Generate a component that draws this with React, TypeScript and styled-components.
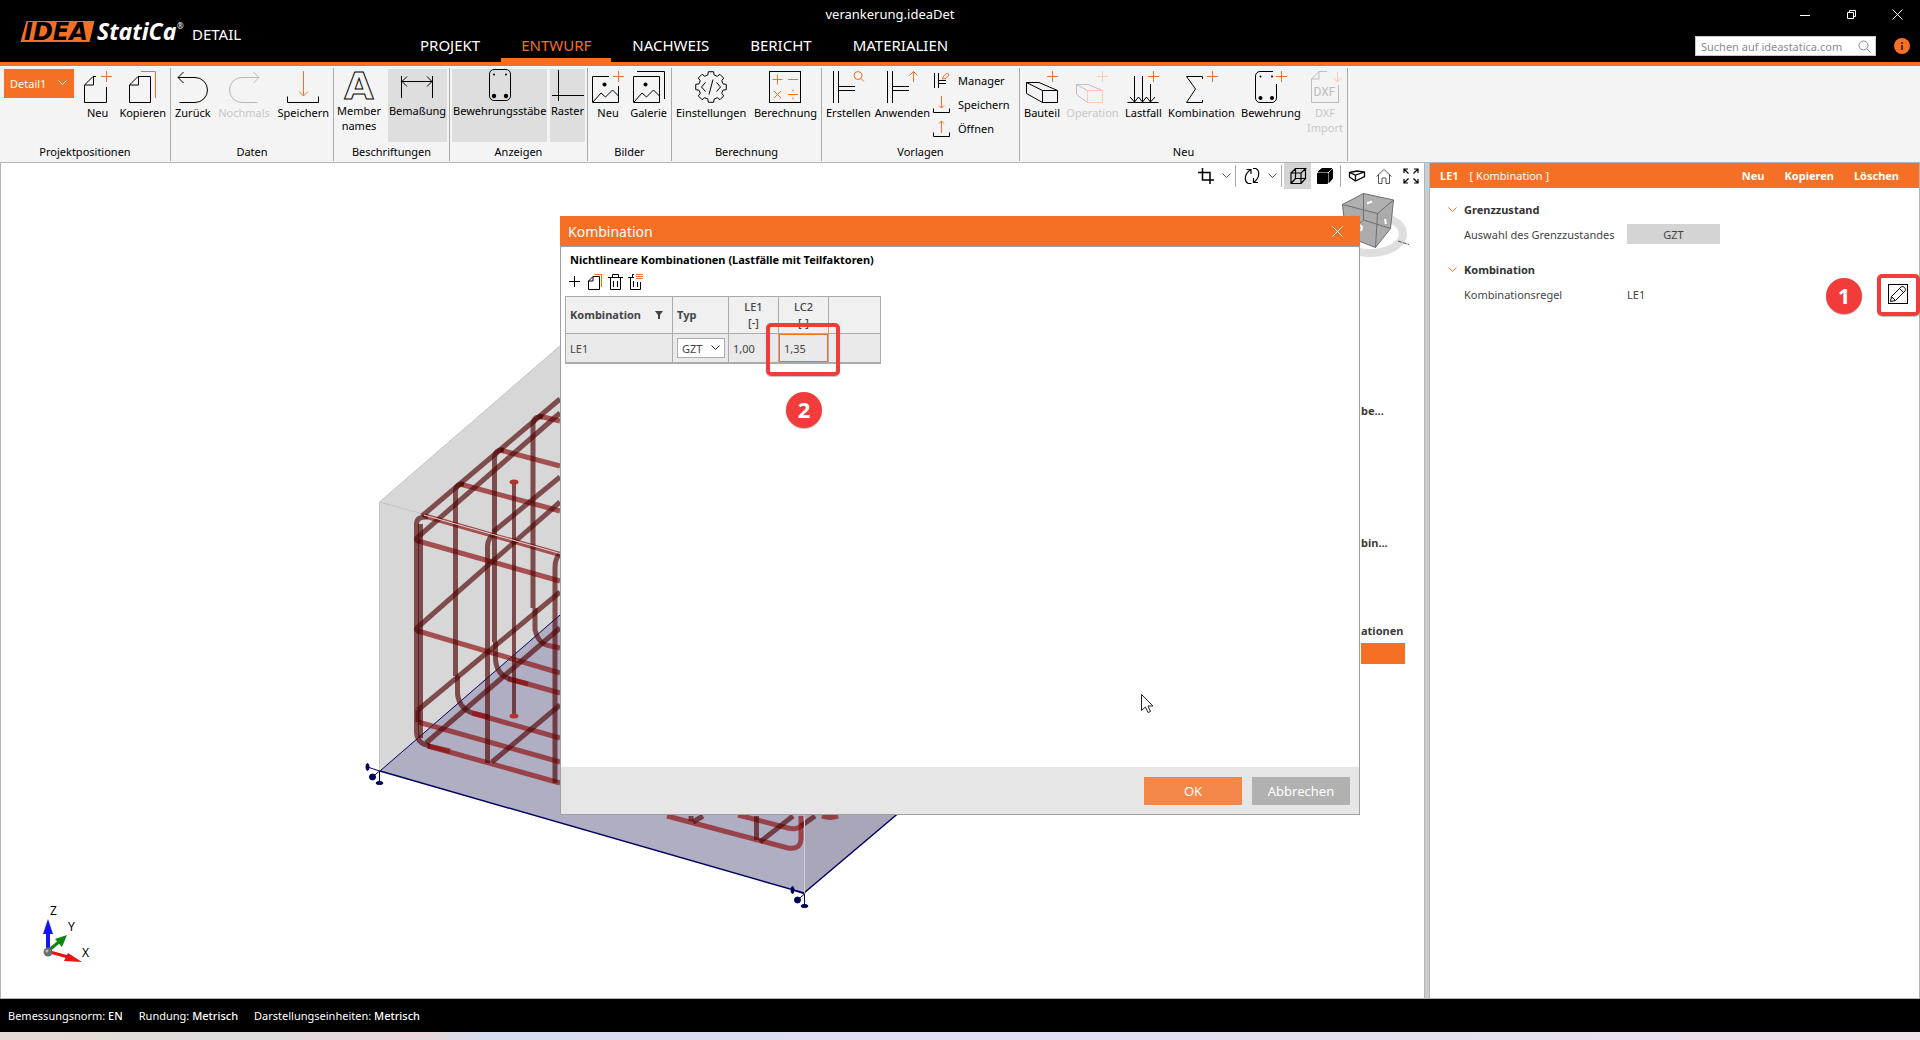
import React from "react";
import styled, { createGlobalStyle, css } from "styled-components";

const orange = "#f56f24";
const alarm = "#f23c3c";
const rule = "#b4b4b4";

const GlobalStyle = createGlobalStyle`
  *, *::before, *::after { box-sizing: border-box; }
  body { margin: 0; background: #fff; font-family: "Noto Sans", "Open Sans", sans-serif; font-size: 11px; color: #000; }
  button, input, select { font: inherit; color: inherit; border-radius: 0; }
  button { border: 0; padding: 0; background: none; }
  svg { display: block; flex: none; }
`;

const Shell = styled.div`
  position: relative;
  display: flex;
  flex-direction: column;
  min-height: 100vh;
`;

/* ---------- header ---------- */

const Header = styled.header`
  display: grid;
  grid-template-columns: 400px minmax(580px, 1fr) 540px;
  height: 66px;
  background: #000;
  color: #fff;
  border-bottom: 4px solid ${orange};
`;

const Brand = styled.div`
  display: flex;
  align-items: flex-start;
  gap: 4px;
  padding: 18px 0 0 20px;
`;

const Product = styled.span`
  font-size: 15px;
  line-height: 32px;
`;

const HeaderMiddle = styled.div`
  display: flex;
  flex-direction: column;
  justify-content: space-between;
`;

const DocTitle = styled.div`
  font-size: 13px;
  line-height: 28px;
  text-align: center;
`;

const Tabs = styled.nav`
  display: flex;
  gap: 1px;
`;

const Tab = styled.a<{ $active?: boolean }>`
  padding: 0 20px;
  height: 33px;
  font-size: 15px;
  line-height: 32px;
  text-decoration: none;
  color: ${(p) => (p.$active ? orange : "#fff")};
  border-bottom: 4px solid ${(p) => (p.$active ? orange : "#000")};
`;

const HeaderRight = styled.div`
  display: flex;
  flex-direction: column;
  align-items: flex-end;
`;

const WindowButtons = styled.div`
  display: flex;
  height: 36px;
`;

const WindowButton = styled.button`
  display: flex;
  justify-content: center;
  width: 46px;
  padding-top: 9px;
`;

const SearchLine = styled.div`
  display: flex;
  align-items: center;
  gap: 18px;
  padding-right: 10px;
`;

const SearchBox = styled.label`
  display: flex;
  align-items: center;
  width: 181px;
  height: 20px;
  padding: 0 4px 0 5px;
  background: #fff;
  border: 1px solid #c8c8c8;
`;

const SearchInput = styled.input`
  flex: 1;
  min-width: 0;
  padding: 0;
  border: 0;
  outline: 0;
  background: none;
  color: #444;
  &::placeholder { color: #8c8c8c; opacity: 1; }
`;

/* ---------- ribbon ---------- */

const Ribbon = styled.div`
  display: flex;
  height: 97px;
  padding: 2px 0 1px;
  background: #f4f4f4;
  border-bottom: 1px solid ${rule};
`;

const Group = styled.section<{ $width: number }>`
  flex: 0 0 ${(p) => p.$width}px;
  display: flex;
  flex-direction: column;
  border-right: 1px solid #aaa;
`;

const GroupBody = styled.div`
  display: flex;
  justify-content: space-between;
  height: 76px;
  padding: 1px 2px;
`;

const GroupName = styled.div`
  line-height: 18px;
  text-align: center;
`;

const Tool = styled.button<{ $on?: boolean; $high?: boolean; $faded?: boolean }>`
  display: flex;
  flex-direction: column;
  align-items: center;
  gap: 2px;
  padding: ${(p) => (p.$high ? "0 1px" : "2px 2px 0")};
  line-height: 15px;
  background: ${(p) => (p.$on ? "#dedede" : "none")};
  color: ${(p) => (p.$faded ? "#c8c8c8" : "#000")};
`;

const ToolLabel = styled.span`
  white-space: pre-line;
`;

const ToolStack = styled.div`
  flex: 1;
  display: flex;
  flex-direction: column;
`;

const SmallTool = styled.button`
  display: flex;
  align-items: center;
  gap: 8px;
  height: 24px;
  padding: 0 0 2px 1px;
`;

const PositionPicker = styled.div`
  position: relative;
  width: 70px;
  height: 29px;
  margin: 0 4px 0 2px;
  background: ${orange};
  color: #fff;
`;

const PositionSelect = styled.select`
  appearance: none;
  width: 100%;
  height: 100%;
  padding: 0 0 0 6px;
  border: 0;
  background: transparent;
`;

const PickerArrow = styled.span`
  position: absolute;
  right: 7px;
  top: 11px;
  pointer-events: none;
`;

/* ---------- workspace ---------- */

const Workspace = styled.main`
  flex: 1;
  display: grid;
  grid-template-columns: minmax(0, 1fr) 6px 490px;
  border-left: 1px solid ${rule};
  border-bottom: 1px solid ${rule};
`;

const Viewport = styled.section`
  position: relative;
  display: flex;
  flex-direction: column;
  align-items: flex-end;
`;

const ModelDrawing = styled.svg`
  position: absolute;
  inset: 0;
  width: 100%;
  height: 100%;
`;

const ViewBar = styled.div`
  position: relative;
  display: flex;
  align-items: center;
  height: 26px;
`;

const ViewButton = styled.button<{ $on?: boolean; $narrow?: boolean }>`
  display: flex;
  align-items: center;
  justify-content: center;
  width: ${(p) => (p.$narrow ? 14 : 27)}px;
  height: 26px;
  background: ${(p) => (p.$on ? "#d4d4d4" : "none")};
`;

const ViewRule = styled.span`
  width: 1px;
  height: 22px;
  margin: 0 2px;
  background: #aaa;
`;

const Tree = styled.div`
  position: absolute;
  right: 19px;
  top: 240px;
  width: 44px;
  display: flex;
  flex-direction: column;
  color: #3c3c3c;
  font-weight: 700;
  line-height: 16px;
`;

const TreeNode = styled.div<{ $gap: number }>`
  margin-bottom: ${(p) => p.$gap}px;
`;

const TreeSelection = styled.div`
  height: 21px;
  background: ${orange};
`;

const Splitter = styled.div`
  background: #cdcdcd;
  border-left: 1px solid ${rule};
  border-right: 1px solid ${rule};
`;

const Panel = styled.aside`
  border-right: 1px solid ${rule};
  color: #444;
`;

const PanelHead = styled.div`
  display: flex;
  align-items: center;
  gap: 11px;
  height: 25px;
  padding: 0 20px 1px 10px;
  background: ${orange};
  color: #fff;
`;

const PanelActions = styled.div`
  display: flex;
  gap: 20px;
  margin-left: auto;
  font-weight: 700;
`;

const Property = styled.div`
  position: relative;
  display: flex;
  align-items: center;
  height: 24px;
  padding: 0 11px 0 34px;
`;

const PropertyName = styled.label`
  width: 163px;
`;

const Section = styled.section`
  padding: 9px 0 2px;
`;

const SectionTitle = styled.button`
  display: flex;
  align-items: center;
  gap: 7px;
  height: 25px;
  padding-left: 18px;
  font-weight: 700;
  color: #333;
`;

const StateButton = styled.button`
  width: 93px;
  height: 20px;
  background: #d4d4d4;
`;

const EditButton = styled.button`
  margin-left: auto;
`;

/* ---------- callouts ---------- */

const Frame = styled.div<{ $x: number; $y: number; $w: number; $h: number; $fromRight?: boolean }>`
  position: absolute;
  ${(p) => (p.$fromRight ? css`right: ${p.$x}px;` : css`left: ${p.$x}px;`)}
  top: ${(p) => p.$y}px;
  width: ${(p) => p.$w}px;
  height: ${(p) => p.$h}px;
  border: 4px solid ${alarm};
  border-radius: 5px;
  box-shadow: 0 1px 1px #8888;
  pointer-events: none;
`;

const Step = styled.div<{ $x: number; $y: number; $fromRight?: boolean }>`
  position: absolute;
  ${(p) => (p.$fromRight ? css`right: ${p.$x}px;` : css`left: ${p.$x}px;`)}
  top: ${(p) => p.$y}px;
  width: 36px;
  height: 36px;
  border-radius: 50%;
  background: ${alarm};
  box-shadow: 0 1px 1px #8888;
  color: #fff;
  font: 700 22px/35px "Noto Sans", sans-serif;
  text-align: center;
`;

/* ---------- dialog ---------- */

const Overlay = styled.div`
  position: absolute;
  inset: 0;
  display: flex;
  justify-content: center;
  align-items: flex-start;
  padding-top: 216px;
`;

const Dialog = styled.div`
  position: relative;
  display: flex;
  flex-direction: column;
  width: 800px;
  height: 599px;
  background: #fff;
  border: 1px solid #a0a0a0;
  border-top: 0;
`;

const DialogHead = styled.div`
  display: flex;
  align-items: center;
  justify-content: space-between;
  height: 31px;
  margin: 0 -1px;
  padding: 0 17px 0 8px;
  background: ${orange};
  border-bottom: 1px solid #a0a0a0;
  color: #fff;
  font-size: 14px;
`;

const DialogBody = styled.div`
  flex: 1;
  padding: 4px;
`;

const DialogTitle = styled.h2`
  margin: 0 0 0 5px;
  font-size: 11px;
  line-height: 18px;
`;

const IconRow = styled.div`
  display: flex;
  gap: 4px;
  margin: 5px 0 6px 3px;
`;

const Grid = styled.table`
  width: 315px;
  table-layout: fixed;
  border-collapse: collapse;
  border: 1px solid #ababab;
  border-bottom-width: 2px;
  color: #444;
  tbody tr { height: 29px; background: #eaeaea; }
`;

const Head = styled.th<{ $w: number; $center?: boolean }>`
  width: ${(p) => p.$w}px;
  height: 37px;
  padding: 0 4px;
  border: 1px solid #ababab;
  background: #f0f0f0;
  line-height: 16px;
  text-align: ${(p) => (p.$center ? "center" : "left")};
  font-weight: ${(p) => (p.$center ? 500 : 700)};
`;

const HeadLine = styled.span`
  display: flex;
  align-items: center;
  justify-content: space-between;
  padding-right: 5px;
`;

const Cell = styled.td<{ $flush?: boolean }>`
  padding: ${(p) => (p.$flush ? 0 : "0 4px")};
  border: 1px solid #ababab;
`;

const TypeBox = styled.div`
  position: relative;
  width: 48px;
  height: 20px;
  background: #fff;
  border: 1px solid #ababab;
`;

const TypeSelect = styled.select`
  appearance: none;
  display: block;
  width: 46px;
  height: 18px;
  padding: 0 0 0 4px;
  border: 0;
  background: transparent;
`;

const TypeArrow = styled.span`
  position: absolute;
  right: 4px;
  top: 6px;
  pointer-events: none;
`;

const FactorInput = styled.input`
  display: block;
  width: 100%;
  height: 28px;
  padding: 0 4px;
  border: 1px solid ${orange};
  background: transparent;
  outline: 0;
`;

const DialogFoot = styled.div`
  display: flex;
  justify-content: flex-end;
  gap: 10px;
  height: 47px;
  padding: 10px 9px;
  background: #e6e6e6;
`;

const FootButton = styled.button<{ $main?: boolean }>`
  width: 98px;
  height: 28px;
  background: ${(p) => (p.$main ? "#f28749" : "#b1b1b1")};
  color: #fff;
  font-size: 13px;
`;

const Pointer = styled.svg`
  position: absolute;
  left: 580px;
  top: 478px;
`;

/* ---------- footer ---------- */

const StatusBar = styled.footer`
  display: flex;
  align-items: center;
  gap: 16px;
  height: 33px;
  padding: 0 8px 1px;
  background: #000;
  color: #fff;
`;

const StatusValue = styled.span`
  font-weight: 500;
`;

const DesktopEdge = styled.div`
  height: 8px;
  background: linear-gradient(90deg, #e5dcd5 0, #dfdcda 14%, #ead6d8 22%, #d6dcee 25%, #dfdff2 50%, #e6e0ee 75%, #eee2ea 100%);
`;

/* ---------- icons ---------- */

const Ico = ({ s = 32, h, children, c = "#000", w = 1 }: { s?: number; h?: number; children: React.ReactNode; c?: string; w?: number }) => (
  <svg width={s} height={h ?? s} viewBox={`0 0 ${s} ${h ?? s}`} fill="none" stroke={c} strokeWidth={w} overflow="visible" aria-hidden="true">
    {children}
  </svg>
);

const Plus = ({ x = 26.5, y = 5.5, c = orange }: { x?: number; y?: number; c?: string }) => (
  <path stroke={c} d={`M${x} ${y - 5.5}v11M${x - 5.5} ${y}h11`} />
);

const Chevron = ({ c = "#fff" }: { c?: string }) => (
  <Ico s={9} h={6} c={c}><path d="M.5 .5l4 4 4-4" /></Ico>
);

const IconNewDoc = () => <Ico><path d="M14 5.5H11L2.500 14V31.500H24.500V16M11.500 5.500V14H3" /><Plus x={24.5} /></Ico>;
const IconCopyDoc = () => <Ico><path d="M11 5.500H23.500V31.500H2.500V14ZM11.500 5.500V14H3" /><path stroke={orange} d="M14 .5H28.500V27" /></Ico>;
const IconUndo = () => <Ico><path d="M6.500 1L1 6.500 6.500 12M1 6.500H18a12.500 12.500 0 0 1 0 25H2.500" /></Ico>;
const IconRedo = () => <Ico c="#b8b8b8"><path d="M25.500 1L31 6.500 25.500 12M31 6.500H14a12.500 12.500 0 0 0 0 25H29.500" /></Ico>;
const IconSave = () => <Ico><path d="M.5 25.500V31.500H31.500V25.500" /><path stroke={orange} d="M16.500 0V25M12 20.500l4.500 4.500 4.500-4.500" /></Ico>;
const IconLetter = () => <Ico><text x="16" y="30" fontFamily="DejaVu Sans, sans-serif" fontWeight="700" fontSize="38" textAnchor="middle">A</text></Ico>;
const IconDimension = () => <Ico><path d="M.5 7V29M31.500 7V29M1 12.500H31M6 7.500l-5 5 5 5M26 7.500l5 5-5 5" /></Ico>;
const IconRebar = () => (
  <Ico><rect x="5.500" y=".5" width="21" height="31" rx="4.500" /><g fill="#000" stroke="none"><circle cx="10" cy="5.500" r="1" /><circle cx="22" cy="5.500" r="1" /><circle cx="10" cy="27" r="2.200" /><circle cx="22" cy="27" r="2.200" /></g></Ico>
);
const IconRaster = () => <Ico><path d="M6.500 1V32M0 26.500H32" /></Ico>;
const IconImageNew = () => <Ico><path d="M17 5.500H.5V31.500H26.500V15M1 31l8-9 4.500 4 7-7 6 6" /><circle cx="12.500" cy="13.500" r="2" fill="#000" stroke="none" /><Plus /></Ico>;
const IconGallery = () => <Ico><path d="M.5 5.500H26.500V31.500H.5ZM4 .5H31.500V28M1 31l8-9 4.500 4 7-7 6 6" /><circle cx="12.500" cy="13.500" r="2" fill="#000" stroke="none" /></Ico>;

const gear = (() => {
  const pts: string[] = [];
  const teeth = 8;
  for (let i = 0; i < teeth; i++) {
    const a = (i / teeth) * Math.PI * 2 - Math.PI / 2;
    [[-0.26, 12.4], [-0.17, 15.5], [0.17, 15.5], [0.26, 12.4]].forEach(([d, r]) =>
      pts.push(`${(16 + Math.cos(a + d) * r).toFixed(2)} ${(16 + Math.sin(a + d) * r).toFixed(2)}`));
  }
  return `M${pts.join("L")}Z`;
})();
const IconGear = () => <Ico><path strokeLinejoin="round" d={gear} /><path d="M10.500 11.500L6.500 16l4 4.500M21.500 11.500l4 4.500-4 4.500M18 8.500L14 23.500" /></Ico>;
const IconCalc = () => <Ico><rect x=".5" y=".5" width="31" height="31" /><path stroke={orange} d="M8.500 3.500v10M3.500 8.500h10M19 8.500h10M5 20l7 7M12 20l-7 7M19 23.500h10M24 18.500v2M24 26.500v2" /></Ico>;
const IconCreate = () => <Ico><path d="M1.500 0V32M6.500 0V32M7 15.500H23M7 19.500H23" /><circle cx="26" cy="4.500" r="4" stroke={orange} /><path stroke={orange} d="M29 7.500l3 3" /></Ico>;
const IconApply = () => <Ico><path d="M1.500 0V32M6.500 0V32M7 15.500H23M7 19.500H23" /><path stroke={orange} d="M27.500 11V.5M23.500 4.500l4-4 4 4" /></Ico>;
const IconManager = () => <Ico s={17}><path d="M1.500 1V16M5.500 1V16M6 8.500H13M6 11.500H13" /><path stroke={orange} d="M9.500 7l1-3 4-3 1.500 2-3 3.500z" /></Ico>;
const IconLoad = ({ up }: { up?: boolean }) => (
  <Ico s={17}><path d="M.5 12.500V16.500H16.500V12.500" /><path stroke={orange} d={up ? "M8.500 13V1M6 3.500L8.500 1 11 3.500" : "M8.500 0V12M6 9.500L8.500 12 11 9.500"} /></Ico>
);
const beam = "M.5 11.500L13 11.500 31.500 19.500V31.500H16.500L.5 22.500ZM.5 11.500L16.500 19.500H31.500M16.500 19.500V31.500";
const IconBeam = () => <Ico><path d={beam} /><Plus /></Ico>;
const IconOperation = () => <Ico c="#c0c0c0"><path d="M.5 13.500H12L26.500 19.500M.5 13.500L11.500 19.500V31.500L.5 23.500Z" /><path stroke="#f8cdb2" d="M11.500 19.500H26.500V31.500H11.500Z" /><Plus c="#f8cdb2" /></Ico>;
const IconLoadCase = () => <Ico><path d="M.5 31.500H31.500M7.500 5V31M15.500 5V31M23.500 13V31M3 26l4.500 5 4-5 4 5 4-5 4 5 4.500-5" /><Plus /></Ico>;
const IconSum = () => <Ico><path d="M17.500 8V5.500H1.500L10.500 18 1.500 31.500H17.500V29" /><Plus x={27.5} /></Ico>;
const IconRebarNew = () => (
  <Ico><path d="M18 .5H5A4.500 4.500 0 0 0 .5 5V27A4.500 4.500 0 0 0 5 31.500H17A4.500 4.500 0 0 0 21.500 27V13" /><g fill="#000" stroke="none"><circle cx="5.500" cy="5.500" r="1" /><circle cx="17" cy="5.500" r="1" /><circle cx="5.500" cy="27" r="2" /><circle cx="17" cy="27" r="2" /></g><Plus /></Ico>
);
const IconDxf = () => (
  <Ico c="#bdbdbd"><path d="M18 .5H10L2.500 8V31.500H29.500V14M10 .5V8H2.500" /><path stroke="#f8cdb2" d="M28.500 1V11M24.500 7l4 4 4-4" /><text x="15.500" y="24.500" fill="#bdbdbd" stroke="none" fontFamily="Roboto, sans-serif" fontSize="12" textAnchor="middle">DXF</text></Ico>
);
const CloseIcon = () => <Ico s={11} c="#fff"><path d="M.5 .5l10 10M10.500 .5l-10 10" /></Ico>;

const Logo = () => (
  <svg width="168" height="26" viewBox="20 18 168 26" overflow="visible" role="img" aria-label="IDEA StatiCa">
    <path d="M26.500 21H94.500L89.500 42H20.500Z" fill={orange} />
    <text x="24" y="40" fontFamily="DejaVu Sans, sans-serif" fontWeight="700" fontStyle="italic" fontSize="24" fill="#000">IDEA</text>
    <text x="97" y="40" fontFamily="Noto Sans, sans-serif" fontWeight="700" fontStyle="italic" fontSize="23" fill="#fff">StatiCa</text>
    <text x="177" y="29" fontFamily="Noto Sans, sans-serif" fontSize="8" fill="#fff">®</text>
  </svg>
);

/* ---------- 3D model ---------- */

const longBars = [
  "M418 541L560 581", "M418 631L560 673", "M418 722L560 762", "M425 516L560 554.500",
  "M428 746L560 783", "M472 713L560 738", "M510 679L560 693", "M546 645L560 648",
  "M460 484L560 511", "M500 450L560 466", "M539 416L560 421",
  "M428 746L450 751M472 713L489 717M508 679L528 684",
  "M667 816L788 848Q801 850 801 838V816", "M738 815L788 828Q797 830 801 826", "M822 816Q830 819 838 816",
];
const crossBars = [
  "M422 516L560 399", "M418 537L560 413", "M418 627L560 502", "M418 710L560 592",
  "M426 743L560 628", "M492 762L560 705", "M493 532L560 477",
  "M418 537Q414 540 420 542", "M418 627Q414 630 420 632", "M418 710V722",
  "M760 842L793 816M693 822L703 816M801 826L815 816",
];
const uprights = [
  "M416.500 732V524Q416.500 516 428 517", "M416.500 732Q417 744 430 746", "M420.500 738V524",
  "M455.500 676V491Q455.500 484 464 484", "M457.500 676V694Q459 708 472 713",
  "M494.500 642V458Q495 449 504 450", "M495.500 642V660Q497 675 510 679",
  "M533 608V424Q534 415 543 417", "M535 608V630Q538 642 546 645",
  "M487.500 763V546Q488 538 494 534", "M555 783V568Q555 558 560 554",
  "M756.500 816V840M691 816V821",
];

const Support = ({ x, y, dx }: { x: number; y: number; dx: number }) => (
  <g stroke="#000060" fill="#000060">
    <path d={`M${x} ${y}l${-dx} -4M${x} ${y}l-7 6M${x} ${y}v12`} />
    <ellipse cx={x - dx} cy={y - 4} rx="1.500" ry="3.500" />
    <circle cx={x - 7} cy={y + 6} r="3" />
    <ellipse cx={x} cy={y + 12} rx="3.500" ry="1.500" />
  </g>
);

const Model = () => (
  <ModelDrawing viewBox="1 163 1423 835" preserveAspectRatio="xMinYMin meet" fill="none" role="img" aria-label="Bewehrungsmodell">
    <path d="M379.500 502L620 294V800H560L380 771Z" fill="#d7d7d7" />
    <path d="M379.500 771V502L620 294M379.500 502L560 552" stroke="#c4c4c4" />
    <path d="M380 771L560 615L820 700V816H895L804 893Z" fill="#b0aec2" />
    <path d="M804 800H914L804 893Z" fill="#a8a6b8" />
    <path d="M620 563L380 771" stroke="#000060" />
    <path d="M380 771L804 893L914 800" stroke="#000060" strokeWidth="1.500" />
    <g stroke="rgba(140,10,10,.66)" strokeWidth="5">{longBars.map((d) => <path key={d} d={d} />)}</g>
    <g stroke="rgba(80,5,5,.66)" strokeWidth="5">
      {crossBars.map((d) => <path key={d} d={d} />)}
      {uprights.map((d) => <path key={d} d={d} />)}
      <path d="M514 482V715" strokeWidth="4" />
    </g>
    <g fill="#b3342f"><ellipse cx="514" cy="482" rx="4.500" ry="2.500" /><ellipse cx="514" cy="716" rx="4.500" ry="2.500" /></g>
    <path d="M424 515L560 553.500" stroke="#e0d4d4" />
    <path d="M804.500 800V893" stroke="#cfcfcf" />
    <Support x={379.5} y={771} dx={12} />
    <Support x={804.5} y={894} dx={12} />

    <g>
      <path d="M48 951L60 941" stroke="#0d840d" strokeWidth="3" />
      <path d="M67 935L55 939L62 947Z" fill="#0d840d" />
      <path d="M50 952L68 957" stroke="#f01010" strokeWidth="3" />
      <path d="M82 962L68 953L64 961Z" fill="#f01010" />
      <path d="M48 950V932" stroke="#1414f5" strokeWidth="4" />
      <path d="M48 919L43 934H53Z" fill="#1414f5" />
      <circle cx="48" cy="952" r="4.500" fill="#6e6e6e" />
      <circle cx="47" cy="951" r="1.500" fill="#bbb" />
      <g fill="#000" fontSize="12" fontFamily="Noto Sans, sans-serif"><text x="50" y="915">Z</text><text x="68" y="931">Y</text><text x="82" y="957">X</text></g>
    </g>

    <ellipse cx="1370" cy="234" rx="33" ry="19" stroke="#dedede" strokeWidth="8" />
    <path d="M1342.500 204.500L1363.500 193.500L1393.500 200L1390.500 228.500L1375.500 247.500L1346 236Z" fill="#a6a6a6" fillOpacity=".93" />
    <path d="M1342.500 204.500L1363.500 193.500L1393.500 200L1377.500 213.500Z" fill="#b0b0b0" />
    <path d="M1342.500 204.500L1363.500 193.500L1393.500 200L1390.500 228.500L1375.500 247.500L1346 236ZM1342.500 204.500L1377.500 213.500L1393.500 200M1377.500 213.500L1375.500 247.500M1363.500 193.500V220L1346 236M1363.500 220L1390.500 228.500" stroke="#6e6e6e" />
    <path d="M1367 203.500l5-2M1360 225l2 2-1 4M1385 219l1 5" stroke="#fff" strokeWidth="2" />
    <path d="M1398 241L1409 244.500" stroke="#555" strokeDasharray="4 1" />
  </ModelDrawing>
);

/* ---------- page ---------- */

const T = ({ icon, label, ...rest }: { icon: React.ReactNode; label: string; $on?: boolean; $high?: boolean; $faded?: boolean }) => (
  <Tool type="button" aria-pressed={rest.$on} {...rest}>
    {icon}
    <ToolLabel>{label}</ToolLabel>
  </Tool>
);

const G = ({ name, width, children }: { name: string; width: number; children: React.ReactNode }) => (
  <Group $width={width}>
    <GroupBody>{children}</GroupBody>
    <GroupName>{name}</GroupName>
  </Group>
);

export default function App() {
  return (
    <>
      <GlobalStyle />
      <Shell>
        <Header>
          <Brand><Logo /><Product>DETAIL</Product></Brand>
          <HeaderMiddle>
            <DocTitle>verankerung.ideaDet</DocTitle>
            <Tabs>
              {["PROJEKT", "ENTWURF", "NACHWEIS", "BERICHT", "MATERIALIEN"].map((t) => (
                <Tab key={t} href="#" $active={t === "ENTWURF"}>{t}</Tab>
              ))}
            </Tabs>
          </HeaderMiddle>
          <HeaderRight>
            <WindowButtons>
              <WindowButton type="button" aria-label="Minimieren"><Ico s={11} c="#fff"><path d="M0 6.500H10" /></Ico></WindowButton>
              <WindowButton type="button" aria-label="Wiederherstellen"><Ico s={11} c="#fff"><path d="M1.500 3.500H7.500V9.500H1.500ZM3.500 3V1.500H9.500V7.500H8" /></Ico></WindowButton>
              <WindowButton type="button" aria-label="Schließen"><CloseIcon /></WindowButton>
            </WindowButtons>
            <SearchLine>
              <SearchBox>
                <SearchInput type="search" aria-label="Suchen" placeholder="Suchen auf ideastatica.com" />
                <Ico s={13} c="#888"><circle cx="5.500" cy="5.500" r="4.500" /><path d="M8.500 8.500l4 4" /></Ico>
              </SearchBox>
              <button type="button" aria-label="Info">
                <svg width="16" height="16" viewBox="0 0 16 16"><circle cx="8" cy="8" r="8" fill={orange} /><path d="M7 4h2v2H7zM7 7h2v5H7z" fill="#5a2a0c" /></svg>
              </button>
            </SearchLine>
          </HeaderRight>
        </Header>

        <Ribbon>
          <G name="Projektpositionen" width={171}>
            <PositionPicker>
              <PositionSelect aria-label="Projektposition"><option>Detail1</option></PositionSelect>
              <PickerArrow><Chevron /></PickerArrow>
            </PositionPicker>
            <T icon={<IconNewDoc />} label="Neu" />
            <T icon={<IconCopyDoc />} label="Kopieren" />
          </G>
          <G name="Daten" width={163}>
            <T icon={<IconUndo />} label="Zurück" />
            <T icon={<IconRedo />} label="Nochmals" $faded />
            <T icon={<IconSave />} label="Speichern" />
          </G>
          <G name="Beschriftungen" width={116}>
            <T icon={<IconLetter />} label={"Member\nnames"} $high />
            <T icon={<IconDimension />} label="Bemaßung" $on $high />
          </G>
          <G name="Anzeigen" width={138}>
            <T icon={<IconRebar />} label="Bewehrungsstäbe" $on $high />
            <T icon={<IconRaster />} label="Raster" $on $high />
          </G>
          <G name="Bilder" width={84}>
            <T icon={<IconImageNew />} label="Neu" />
            <T icon={<IconGallery />} label="Galerie" />
          </G>
          <G name="Berechnung" width={150}>
            <T icon={<IconGear />} label="Einstellungen" />
            <T icon={<IconCalc />} label="Berechnung" />
          </G>
          <G name="Vorlagen" width={198}>
            <T icon={<IconCreate />} label="Erstellen" />
            <T icon={<IconApply />} label="Anwenden" />
            <ToolStack>
              <SmallTool type="button"><IconManager />Manager</SmallTool>
              <SmallTool type="button"><IconLoad />Speichern</SmallTool>
              <SmallTool type="button"><IconLoad up />Öffnen</SmallTool>
            </ToolStack>
          </G>
          <G name="Neu" width={328}>
            <T icon={<IconBeam />} label="Bauteil" />
            <T icon={<IconOperation />} label="Operation" $faded />
            <T icon={<IconLoadCase />} label="Lastfall" />
            <T icon={<IconSum />} label="Kombination" />
            <T icon={<IconRebarNew />} label="Bewehrung" />
            <T icon={<IconDxf />} label={"DXF\nImport"} $faded />
          </G>
        </Ribbon>

        <Workspace>
          <Viewport>
            <Model />
            <ViewBar>
              <ViewButton type="button" aria-label="Ausschnitt"><Ico s={16}><path strokeWidth="1.500" d="M4.500 0V12H16M0 4.500H12V16" /></Ico></ViewButton>
              <ViewButton type="button" $narrow aria-label="Ausschnitt wählen"><Chevron c="#555" /></ViewButton>
              <ViewRule />
              <ViewButton type="button" aria-label="Drehen"><Ico s={16}><path strokeWidth="1.200" d="M4 15.500C0 13 0 6 7 1.500M2.500 1.500H7V6M4 15.500H7.500M12 .5C16 3 16 10 9.500 14.500M14 14.500H9.500V10M9 .5H12" /></Ico></ViewButton>
              <ViewButton type="button" $narrow aria-label="Drehung wählen"><Chevron c="#555" /></ViewButton>
              <ViewRule />
              <ViewButton type="button" $on aria-label="Drahtmodell"><Ico s={16}><path strokeWidth="1.200" d="M1 5H11V15.500H1ZM1 5L5.500 .5H15.500L11 5M15.500 .5V10.500L11 15.500M5.500 .5V10.500H15.500M5.500 10.500L1 15.500" /></Ico></ViewButton>
              <ViewButton type="button" aria-label="Volumenmodell"><Ico s={16}><path fill="#000" d="M.5 5.500H10.500V15.500H.5ZM1 4L5 .5H15L11 4ZM12 5L15.500 1.500V10.500L12 14.500Z" /></Ico></ViewButton>
              <ViewRule />
              <ViewButton type="button" aria-label="Schnitt"><Ico s={16}><path strokeWidth="1.300" d="M.5 4.500L8 3 15.500 4V8.500L6.500 13 .5 9ZM.5 4.500L6.500 7 15.500 4M6.500 7V13" /></Ico></ViewButton>
              <ViewButton type="button" aria-label="Start"><Ico s={16} c="#555"><path d="M.5 8.500L8 1.500l7.500 7M2.500 7V15.500H6V10H10V15.500H13.500V7" /></Ico></ViewButton>
              <ViewButton type="button" aria-label="Einpassen"><Ico s={16}><path strokeWidth="1.200" d="M1 5V1H5M1 1l4.500 4.500M11 1H15V5M15 1l-4.500 4.500M1 11V15H5M1 15l4.500-4.500M11 15H15V11M15 15l-4.500-4.500" /></Ico></ViewButton>
            </ViewBar>
            <Tree>
              <TreeNode $gap={116}>be...</TreeNode>
              <TreeNode $gap={72}>bin...</TreeNode>
              <TreeNode $gap={4}>ationen</TreeNode>
              <TreeSelection />
            </Tree>
          </Viewport>
          <Splitter />
          <Panel>
            <PanelHead>
              <b>LE1</b>
              <span>[ Kombination ]</span>
              <PanelActions>
                <button type="button">Neu</button>
                <button type="button">Kopieren</button>
                <button type="button">Löschen</button>
              </PanelActions>
            </PanelHead>
            <Section>
              <SectionTitle type="button"><Chevron c={orange} />Grenzzustand</SectionTitle>
              <Property>
                <PropertyName htmlFor="state">Auswahl des Grenzzustandes</PropertyName>
                <StateButton id="state" type="button">GZT</StateButton>
              </Property>
            </Section>
            <Section>
              <SectionTitle type="button"><Chevron c={orange} />Kombination</SectionTitle>
              <Property>
                <PropertyName htmlFor="edit-rule">Kombinationsregel</PropertyName>
                <span>LE1</span>
                <EditButton id="edit-rule" type="button" aria-label="Bearbeiten">
                  <Ico s={20}><rect x=".5" y=".5" width="19" height="19" /><path d="M2.500 17.500L3.500 12.500 13 3Q14.500 1.500 16.500 3.500T17 7L7.500 16.500ZM3.500 12.500L7.500 16.500M11.500 4.500L15.500 8.500" /></Ico>
                </EditButton>
                <Step $fromRight $x={57} $y={-4}>1</Step>
                <Frame $fromRight $x={-1} $y={-8} $w={43} $h={42} />
              </Property>
            </Section>
          </Panel>
        </Workspace>

        <StatusBar>
          <span>Bemessungsnorm: <StatusValue>EN</StatusValue></span>
          <span>Rundung: <StatusValue>Metrisch</StatusValue></span>
          <span>Darstellungseinheiten: <StatusValue>Metrisch</StatusValue></span>
        </StatusBar>
        <DesktopEdge />

        <Overlay>
          <Dialog role="dialog" aria-label="Kombination">
            <DialogHead>
              <span>Kombination</span>
              <button type="button" aria-label="Schließen"><CloseIcon /></button>
            </DialogHead>
            <DialogBody>
              <DialogTitle>Nichtlineare Kombinationen (Lastfälle mit Teilfaktoren)</DialogTitle>
              <IconRow>
                <button type="button" aria-label="Hinzufügen"><Ico s={16}><path d="M6.500 2V13M1 7.500H12" /></Ico></button>
                <button type="button" aria-label="Kopieren"><Ico s={16}><path d="M5 2.500H11.500V15.500H.5V7ZM5 2.500V7H.5" /><path stroke={orange} d="M6.500 .5H13.500V13" /></Ico></button>
                <button type="button" aria-label="Löschen"><Ico s={16}><path d="M0 3.500H15M2.500 4V15.500H12.500V4M4.500 3V.5H10.500V3M5.500 7V13M9.500 7V13" /></Ico></button>
                <button type="button" aria-label="Alle löschen"><Ico s={16}><path d="M0 3.500H6M2.500 4V15.500H12.500V8M4.500 3V.5H6M5.500 7V13M9.500 8V13" /><path stroke={orange} d="M8 .5H15M8 2.500H15M8 4.500H15" /></Ico></button>
              </IconRow>
              <Grid>
                <thead>
                  <tr>
                    <Head $w={107}><HeadLine>Kombination<svg width="8" height="8" viewBox="0 0 8 8"><path d="M0 0H8L5 4V8H3V4Z" fill="#444" /></svg></HeadLine></Head>
                    <Head $w={56}>Typ</Head>
                    <Head $w={50} $center>LE1<br />[-]</Head>
                    <Head $w={50} $center>LC2<br />[-]</Head>
                    <Head $w={52} $center />
                  </tr>
                </thead>
                <tbody>
                  <tr>
                    <Cell>LE1</Cell>
                    <Cell>
                      <TypeBox>
                        <TypeSelect aria-label="Typ"><option>GZT</option></TypeSelect>
                        <TypeArrow><Chevron c="#222" /></TypeArrow>
                      </TypeBox>
                    </Cell>
                    <Cell>1,00</Cell>
                    <Cell $flush><FactorInput aria-label="LC2" defaultValue="1,35" /></Cell>
                    <Cell />
                  </tr>
                </tbody>
              </Grid>
            </DialogBody>
            <DialogFoot>
              <FootButton type="button" $main>OK</FootButton>
              <FootButton type="button">Abbrechen</FootButton>
            </DialogFoot>
            <Frame $x={205} $y={107} $w={74} $h={53} />
            <Step $x={225} $y={176}>2</Step>
            <Pointer width="13" height="20" viewBox="0 0 13 20"><path d="M.5 .5V16.500L4.500 13 7 18.500 9.500 17.500 7 12H12Z" fill="#fff" stroke="#223" /></Pointer>
          </Dialog>
        </Overlay>
      </Shell>
    </>
  );
}
